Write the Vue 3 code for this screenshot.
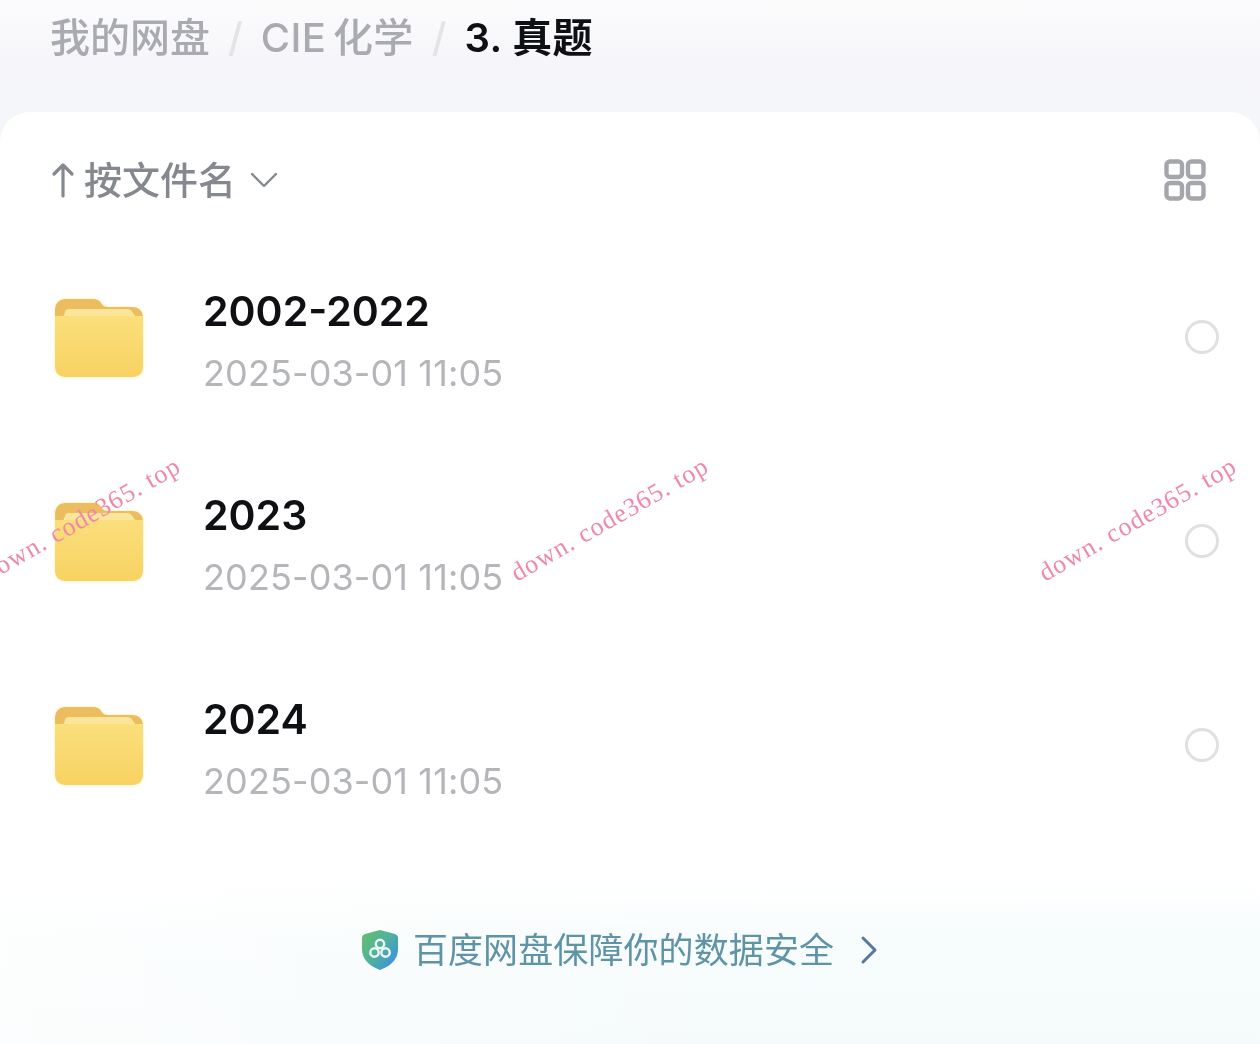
<script setup>
const rows = [
  { name: '2002-2022', time: '2025-03-01 11:05' },
  { name: '2023', time: '2025-03-01 11:05' },
  { name: '2024', time: '2025-03-01 11:05' },
]
const marks = [
  { id: 1, left: '-15px' },
  { id: 2, left: '513px' },
  { id: 3, left: '1041px' },
]
</script>

<template>
  <div class="page">
    <header class="crumbs">
      <span class="crumb">我的网盘</span>
      <span class="sep">/</span>
      <span class="crumb subject">CIE 化学</span>
      <span class="sep">/</span>
      <span class="crumb current">3. 真题</span>
    </header>

    <main class="card">
      <div class="toolbar">
        <div class="sort">
          <svg class="arrow" width="24" height="38" viewBox="0 0 24 38" fill="none" stroke="#85888f" stroke-width="3.2" stroke-linecap="round" stroke-linejoin="round">
            <path d="M12 35V4M3 13l9-9 9 9" />
          </svg>
          <span class="sort-text">按文件名</span>
          <svg class="chev" width="28" height="18" viewBox="0 0 28 18" fill="none" stroke="#85888f" stroke-width="2.4" stroke-linecap="round" stroke-linejoin="round">
            <path d="M2 3l12 12L26 3" />
          </svg>
        </div>
        <svg class="grid" width="42" height="42" viewBox="0 0 42 42" fill="none" stroke="#a4a6ac" stroke-width="4.4">
          <rect x="2.5" y="2.5" width="15.5" height="15.5" rx="3.5" />
          <rect x="24" y="2.5" width="15.5" height="15.5" rx="3.5" />
          <rect x="2.5" y="24" width="15.5" height="15.5" rx="3.5" />
          <rect x="24" y="24" width="15.5" height="15.5" rx="3.5" />
        </svg>
      </div>

      <ul class="list">
        <li v-for="row in rows" :key="row.name" class="row">
          <svg class="folder" width="88" height="80" viewBox="0 0 88 80">
            <defs>
              <linearGradient id="folderFill" x1="0" y1="0" x2="0" y2="1">
                <stop offset="0" stop-color="#fadf7c" />
                <stop offset="1" stop-color="#f8d262" />
              </linearGradient>
            </defs>
            <path d="M0 14C0 6 4 2 11 2h27c4 0 6 1 8 4 2 3 4 4 7 4h24c7 0 11 4 11 11v30H0z" fill="#ebbd5e" />
            <path d="M14 12h58c3 0 5 2 6 4l3 4H8l2-5c0-2 2-3 4-3z" fill="#fbe59a" />
            <path d="M0 19h88v50c0 7-4 11-11 11H11C4 80 0 76 0 69z" fill="url(#folderFill)" />
          </svg>
          <div class="info">
            <div class="name">{{ row.name }}</div>
            <div class="time">{{ row.time }}</div>
          </div>
          <span class="radio"></span>
        </li>
      </ul>

      <footer class="notice">
        <svg width="36" height="42" viewBox="0 0 36 42">
          <defs>
            <linearGradient id="shield" x1="0" y1="0" x2="1" y2="0.8">
              <stop offset="0.1" stop-color="#62bd74" />
              <stop offset="0.55" stop-color="#4fb09e" />
              <stop offset="1" stop-color="#3a8fe6" />
            </linearGradient>
          </defs>
          <path d="M18 1l15 4c2 1 3 2 3 4v11c0 10-7 17-18 21C7 37 0 30 0 20V9c0-2 1-3 3-4z" fill="url(#shield)" />
          <g fill="none" stroke="#eaf6f6" stroke-width="2.4">
            <circle cx="18" cy="15" r="4.2" />
            <circle cx="12.5" cy="23.5" r="4.2" />
            <circle cx="23.5" cy="23.5" r="4.2" />
          </g>
        </svg>
        <span class="notice-text">百度网盘保障你的数据安全</span>
        <svg class="notice-chev" width="18" height="30" viewBox="0 0 18 30" fill="none" stroke="#56789a" stroke-width="3" stroke-linecap="round" stroke-linejoin="round">
          <path d="M3 3l12 12L3 27" />
        </svg>
      </footer>
    </main>

    <span v-for="m in marks" :key="m.id" class="mark" :style="{ left: m.left }">down. code365. top</span>
  </div>
</template>

<style scoped>
.page {
  position: relative;
  width: 1260px;
  height: 1044px;
  overflow: hidden;
  display: flex;
  flex-direction: column;
  background: linear-gradient(180deg, #fcfcfd 0, #f6f6fa 60px, #f5f6fa 112px);
  font-family: "Inter", "Noto Sans CJK SC", sans-serif;
  filter: blur(0.5px);
}
.crumbs {
  height: 112px;
  box-sizing: border-box;
  padding: 14px 0 0 50px;
  display: flex;
  align-items: flex-start;
  gap: 18px;
  font-size: 40px;
  line-height: 48px;
  font-weight: 500;
  color: #a9abb1;
}
.crumb {
  white-space: nowrap;
}
.subject {
  word-spacing: -4px;
  letter-spacing: 0.3px;
}
.sep {
  color: #e3e4e7;
}
.current {
  color: #0f1013;
  font-weight: 600;
  letter-spacing: 0.4px;
}
.card {
  flex: 1;
  display: flex;
  flex-direction: column;
  border-radius: 30px 30px 0 0;
  background:
    linear-gradient(90deg, rgba(255, 255, 255, 0.7) 0, rgba(255, 255, 255, 0) 60%),
    linear-gradient(180deg, #fff 0, #fff 770px, #f7fcfd 830px, #f5fafb 932px);
}
.toolbar {
  height: 123px;
  box-sizing: border-box;
  padding: 12px 54px 0 51px;
  display: flex;
  align-items: center;
  justify-content: space-between;
}
.sort {
  display: flex;
  align-items: center;
}
.sort-text {
  margin-left: 9px;
  font-size: 38px;
  line-height: 46px;
  font-weight: 500;
  color: #85888f;
}
.chev {
  margin-left: 14px;
}
.list {
  list-style: none;
  margin: 0;
  padding: 0;
}
.row {
  height: 204px;
  box-sizing: border-box;
  padding: 0 41px 0 55px;
  display: flex;
  align-items: center;
}
.folder {
  flex: none;
  filter: drop-shadow(0 0 1.5px #fdeea8);
}
.info {
  flex: 1;
  margin-left: 60px;
  padding-top: 10px;
}
.name {
  font-size: 41px;
  line-height: 48px;
  font-weight: 600;
  color: #0f1013;
}
.time {
  margin-top: 14px;
  font-size: 36px;
  line-height: 48px;
  letter-spacing: 0.12px;
  color: #b4b6ba;
}
.radio {
  width: 28px;
  height: 28px;
  border: 3px solid #dfe0e2;
  border-radius: 50%;
}
.notice {
  margin-top: 81px;
  display: flex;
  align-items: center;
  justify-content: center;
  padding-right: 20px;
}
.notice-text {
  margin-left: 15px;
  font-size: 35px;
  line-height: 44px;
  letter-spacing: 0.1px;
  color: #5f93a6;
}
.notice-chev {
  margin-left: 26px;
}
.mark {
  position: absolute;
  top: 560px;
  font-family: "Liberation Serif", serif;
  font-size: 26px;
  letter-spacing: 1px;
  color: #f088aa;
  white-space: nowrap;
  transform: rotate(-29.8deg);
  transform-origin: left center;
}
</style>
